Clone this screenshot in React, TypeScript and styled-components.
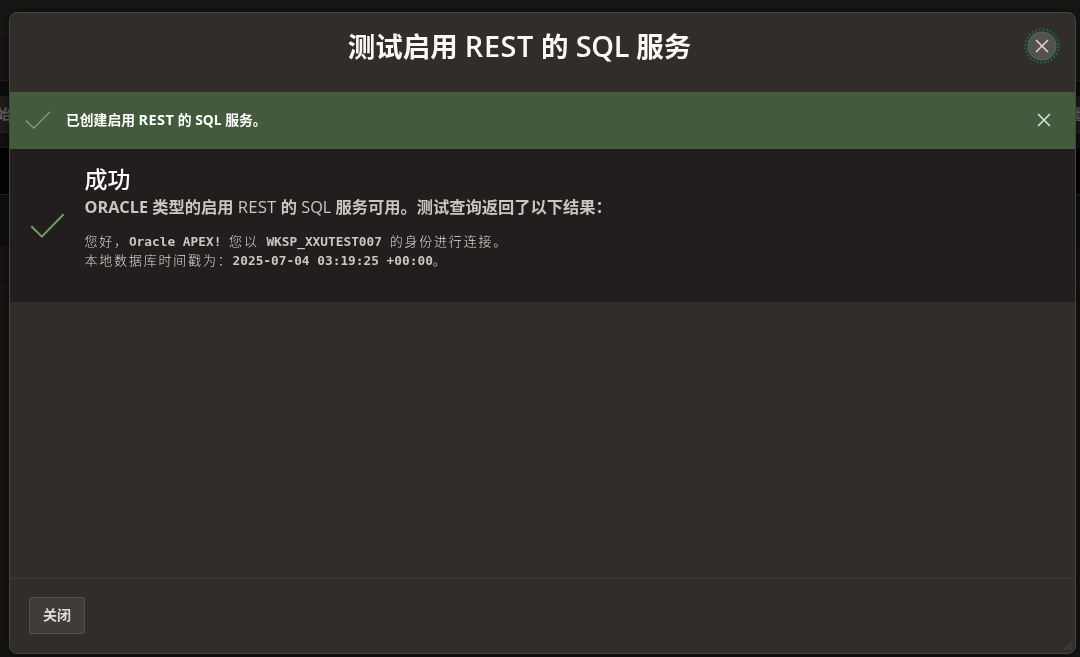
import styled, { createGlobalStyle } from "styled-components";

const colors = {
   page: "#141312",
   dialog: "#312d2a",
   border: "#484441",
   panel: "#221e1d",
   success: "#435a3d",
   check: "#6f9c68",
   bannerCheck: "#76a070",
   white: "#fbf9f8",
   text: "#c9c6c3",
};

const GlobalStyle = createGlobalStyle`
   * {
      box-sizing: border-box;
   }
   body {
      margin: 0;
      overflow: hidden;
      font-family: "Open Sans", "Noto Sans CJK SC", sans-serif;
      background: ${colors.page};
   }
`;

const Page = styled.div`
   display: flex;
   flex-direction: column;
   height: 657px;
   overflow: hidden;
`;

const Strip = styled.div<{ $height: number; $color: string; $line?: string }>`
   display: flex;
   justify-content: space-between;
   align-items: center;
   flex: none;
   height: ${(p) => p.$height}px;
   background: ${(p) => p.$color};
   border-bottom: 1px solid ${(p) => p.$line || p.$color};
   color: #625f5c;
   font-size: 14px;
   font-weight: 700;
   line-height: 20px;
`;

const TabLabel = styled.span<{ $shift: number }>`
   margin: 0 ${(p) => p.$shift}px;
`;

const Dialog = styled.div`
   position: fixed;
   top: 12px;
   left: 9px;
   display: flex;
   flex-direction: column;
   width: 1067px;
   height: 642px;
   border: 1px solid ${colors.border};
   border-radius: 8px;
   background: ${colors.dialog};
   overflow: hidden;
   box-shadow: 0 0 8px rgba(0, 0, 0, 0.5);
`;

const Header = styled.div`
   display: grid;
   grid-template-columns: 50px 1fr 50px;
   height: 79px;
   padding: 15px 15px 0 0;
`;

const Title = styled.h1`
   grid-column: 2;
   margin: 0;
   padding-right: 31px;
   color: ${colors.white};
   font-size: 27.5px;
   font-weight: 700;
   line-height: 37px;
   text-align: center;
   white-space: nowrap;
`;

const Latin = styled.span<{ $weight?: number; $scale?: number; $spacing?: number }>`
   font-size: ${(p) => p.$scale || 1}em;
   font-weight: ${(p) => p.$weight || 600};
   letter-spacing: ${(p) => p.$spacing || 0}px;
   line-height: 1;
`;

const CloseButton = styled.button`
   justify-self: end;
   width: 36px;
   height: 36px;
   padding: 0;
   border: 0;
   background: none;
`;

const Banner = styled.div`
   display: flex;
   align-items: center;
   height: 57px;
   padding: 0 24px 2px 15px;
   background: ${colors.success};
   color: #fff;
   font-size: 13.8px;
   font-weight: 700;
`;

const BannerText = styled.div`
   flex: 1;
   margin-left: 15px;
   line-height: 20px;
   white-space: nowrap;
`;

const Result = styled.div`
   display: flex;
   align-items: center;
   height: 153px;
   padding: 0 20px;
   background: ${colors.panel};
`;

const ResultBody = styled.div`
   align-self: flex-start;
   margin-left: 19.5px;
   padding-top: 14px;
   color: ${colors.text};
   white-space: nowrap;
`;

const ResultTitle = styled.h2`
   margin: 0;
   color: ${colors.white};
   font-size: 23px;
   font-weight: 500;
   line-height: 32px;
`;

const ResultText = styled.p`
   margin: 0;
   font-size: 16.25px;
   font-weight: 700;
   line-height: 24px;
`;

const Output = styled.div`
   margin-top: 12px;
   font-family: "DejaVu Sans Mono", "Noto Sans CJK SC", monospace;
   font-size: 12.8px;
   font-weight: 700;
   line-height: 19px;
`;

const OutputLine = styled.div`
   height: 19px;
`;

const Han = styled.span`
   color: #dedbd8;
   font-family: "Noto Sans CJK SC", sans-serif;
   font-size: 13px;
   font-weight: 300;
   letter-spacing: 1.8px;
`;

const Footer = styled.div`
   display: flex;
   align-items: flex-start;
   height: 75px;
   margin-top: auto;
   padding: 18px 19px;
   border-top: 1px solid #403c38;
`;

const FooterButton = styled.button`
   width: 56px;
   height: 37px;
   padding: 0 0 3px;
   border: 1px solid #54504c;
   border-radius: 2px;
   background: #403c38;
   color: #dedbd8;
   font-family: "Noto Sans CJK SC", sans-serif;
   font-size: 14px;
   font-weight: 700;
   line-height: 20px;
`;

const ResizeGrip = styled.svg`
   position: absolute;
   right: 2px;
   bottom: 2px;
`;

type CheckIconProps = {
   size: number;
   color: string;
};

const CheckIcon = ({ size, color }: CheckIconProps) => (
   <svg width={size} height={size} viewBox="0 0 26 26" fill="none">
      <path d="M1 13.5 L8.8 21.3 L25 4.7" stroke={color} strokeWidth="1.5" />
   </svg>
);

const App: React.FC = () => {
   return (
      <>
         <GlobalStyle />
         <Page>
            <Strip $height={34} $color="#171615" $line="#1d1b1a" />
            <Strip $height={47} $color="#151313" $line="#211f1e" />
            <Strip $height={15} $color="#0e0b0c" />
            <Strip $height={37} $color="#1e1b1b" $line="#252322">
               <TabLabel $shift={-3}>始</TabLabel>
               <TabLabel $shift={-8}>量</TabLabel>
            </Strip>
            <Strip $height={15} $color="#121010" $line="#1b1919" />
            <Strip $height={47} $color="#030303" $line="#242220" />
            <Strip $height={53} $color="#0f0e0d" $line="#171615" />
            <Strip $height={39} $color="#141312" $line="#1c1a18" />
         </Page>
         <Dialog>
            <Header>
               <Title>
                  测试启用{" "}
                  <Latin $scale={1.05} $spacing={0.6}>
                     REST
                  </Latin>{" "}
                  的 <Latin $scale={1.05} $spacing={-0.3}>SQL</Latin> 服务
               </Title>
               <CloseButton aria-label="关闭">
                  <svg width="36" height="36" viewBox="0 0 36 36" fill="none">
                     <circle cx="18" cy="18" r="16.7" stroke="#28634d" strokeWidth="2" strokeDasharray="1.9 1.85" />
                     <circle cx="18" cy="18" r="14" fill="#57514d" stroke="#39745a" strokeWidth="1.2" />
                     <path d="M12 12 L24 24 M24 12 L12 24" stroke="#dedad7" strokeWidth="1.5" />
                  </svg>
               </CloseButton>
            </Header>
            <Banner>
               <CheckIcon size={26} color={colors.bannerCheck} />
               <BannerText>
                  已创建启用{" "}
                  <Latin $weight={700} $scale={1.05} $spacing={0.4}>
                     REST
                  </Latin>{" "}
                  的 <Latin $weight={700}>SQL</Latin> 服务。
               </BannerText>
               <svg width="14" height="14" viewBox="0 0 14 14" fill="none">
                  <path d="M1 1 L13 13 M13 1 L1 13" stroke="#dce1da" strokeWidth="1.5" />
               </svg>
            </Banner>
            <Result>
               <CheckIcon size={35} color={colors.check} />
               <ResultBody>
                  <ResultTitle>成功</ResultTitle>
                  <ResultText>
                     <Latin $weight={700}>ORACLE</Latin> 类型的启用{" "}
                     <Latin $weight={400} $scale={1.03} $spacing={0.2}>
                        REST
                     </Latin>{" "}
                     的 <Latin $weight={400}>SQL</Latin> 服务可用。测试查询返回了以下结果：
                  </ResultText>
                  <Output>
                     <OutputLine>
                        <Han>您好，</Han>Oracle APEX! <Han>您以</Han> WKSP_XXUTEST007 <Han>的身份进行连接。</Han>
                     </OutputLine>
                     <OutputLine>
                        <Han>本地数据库时间戳为：</Han>2025-07-04 03:19:25 +00:00<Han>。</Han>
                     </OutputLine>
                  </Output>
               </ResultBody>
            </Result>
            <Footer>
               <FooterButton>关闭</FooterButton>
            </Footer>
            <ResizeGrip width="10" height="10" viewBox="0 0 10 10">
               <path d="M1 9 L9 1 M4 9 L9 4 M7 9 L9 7" stroke="#4f4a46" strokeWidth="1" />
            </ResizeGrip>
         </Dialog>
      </>
   );
};

export default App;
